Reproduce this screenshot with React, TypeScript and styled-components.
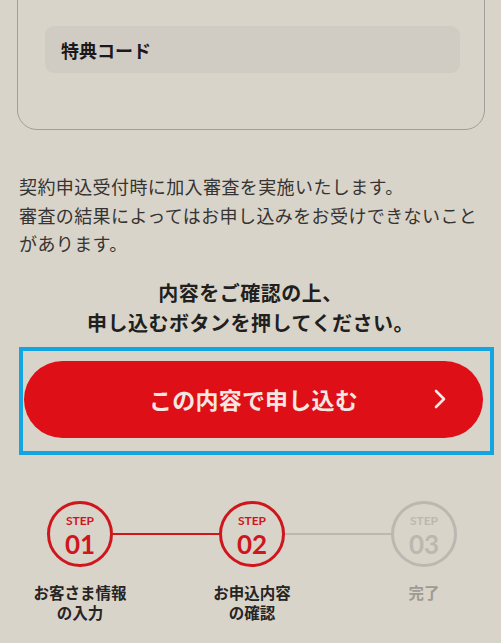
import React from "react";
import styled, { createGlobalStyle } from "styled-components";

const Global = createGlobalStyle`
  html, body {
    margin: 0;
    padding: 0;
    background: #d9d4c9;
  }
  body {
    font-family: "Noto Sans CJK JP", "Noto Sans", sans-serif;
    color: #2c2a2a;
    overflow: hidden;
  }
`;

const Page = styled.div`
  width: 501px;
  height: 643px;
  overflow: hidden;
  background: #d9d4c9;
`;

const Card = styled.div`
  margin: -30px 16px 0 17px;
  padding: 55px 24px 56px 27px;
  border: 1.5px solid #a39d9b;
  border-radius: 20px;
`;

const Field = styled.div`
  height: 47px;
  border-radius: 9px;
  background: #d0ccc3;
  display: flex;
  align-items: center;
  padding-left: 16px;
  font-size: 18px;
  font-weight: 700;
  color: #1c1820;
`;

const Notice = styled.p`
  margin: 42px 0 0 19px;
  font-size: 18px;
  letter-spacing: 0.4px;
  line-height: 28.5px;
  color: #353333;
  white-space: nowrap;
`;

const Prompt = styled.p`
  margin: 20px 0 0 0;
  text-align: center;
  font-size: 20px;
  font-weight: 700;
  line-height: 30px;
  letter-spacing: 0.5px;
  color: #221f1f;
`;

const Highlight = styled.div`
  margin: 9px 7px 0 19px;
  border: 4px solid #13a4e2;
  padding: 10px 7px 13px 1px;
`;

const ApplyButton = styled.button`
  width: 100%;
  height: 77px;
  border: none;
  border-radius: 40px;
  background: #df0f18;
  color: #f3e7e1;
  display: grid;
  grid-template-columns: 1fr auto 1fr;
  align-items: center;
  font-family: inherit;
  font-size: 23px;
  font-weight: 700;
  padding: 0 36px;
  cursor: pointer;
`;

const ButtonLabel = styled.span`
  grid-column: 2;
  letter-spacing: 0.2px;
`;

const Chevron = styled.svg`
  grid-column: 3;
  justify-self: end;
`;

const StepRow = styled.div`
  display: flex;
  align-items: center;
  margin-top: 46px;
  padding-left: 47px;
`;

const Circle = styled.div<{ $active: boolean }>`
  box-sizing: border-box;
  width: 66px;
  height: 66px;
  border-radius: 50%;
  border: 3px solid ${(p) => (p.$active ? "#d0161d" : "#bcb7b0")};
  color: ${(p) => (p.$active ? "#d0161d" : "#bcb7b0")};
  display: flex;
  flex-direction: column;
  align-items: center;
  padding-top: 11px;
  font-family: Lato, "Noto Sans", sans-serif;
  font-weight: 700;
`;

const StepWord = styled.span`
  font-size: 12px;
  line-height: 12px;
`;

const StepNum = styled.span`
  font-size: 26px;
  line-height: 24px;
  margin-top: 5px;
`;

const Connector = styled.div<{ $active: boolean }>`
  width: 106px;
  height: 2px;
  background: ${(p) => (p.$active ? "#d0161d" : "#bcb7b0")};
`;

const LabelRow = styled.div`
  display: flex;
  gap: 52px;
  margin-top: 15px;
  padding-left: 20px;
`;

const Label = styled.div<{ $muted?: boolean }>`
  width: 120px;
  text-align: center;
  font-size: 15.5px;
  font-weight: 700;
  line-height: 20px;
  color: ${(p) => (p.$muted ? "#9e9a94" : "#272424")};
`;

const steps = [
  { n: "01", active: true, label: ["お客さま情報", "の入力"] },
  { n: "02", active: true, label: ["お申込内容", "の確認"] },
  { n: "03", active: false, label: ["完了"] },
];

export default function App() {
  return (
    <Page>
      <Global />
      <Card>
        <Field>特典コード</Field>
      </Card>
      <Notice>
        契約申込受付時に加入審査を実施いたします。
        <br />
        審査の結果によってはお申し込みをお受けできないこと
        <br />
        があります。
      </Notice>
      <Prompt>
        内容をご確認の上、
        <br />
        申し込むボタンを押してください。
      </Prompt>
      <Highlight>
        <ApplyButton>
          <ButtonLabel>この内容で申し込む</ButtonLabel>
          <Chevron width="14" height="22" viewBox="0 0 14 22">
            <path
              d="M3 3 L11 11 L3 19"
              fill="none"
              stroke="#f3e7e1"
              strokeWidth="2.6"
              strokeLinecap="round"
              strokeLinejoin="round"
            />
          </Chevron>
        </ApplyButton>
      </Highlight>
      <StepRow>
        {steps.map((s, i) => (
          <React.Fragment key={s.n}>
            {i > 0 && <Connector $active={s.active} />}
            <Circle $active={s.active}>
              <StepWord>STEP</StepWord>
              <StepNum>{s.n}</StepNum>
            </Circle>
          </React.Fragment>
        ))}
      </StepRow>
      <LabelRow>
        {steps.map((s) => (
          <Label key={s.n} $muted={!s.active}>
            {s.label.map((l, j) => (
              <React.Fragment key={j}>
                {j > 0 && <br />}
                {l}
              </React.Fragment>
            ))}
          </Label>
        ))}
      </LabelRow>
    </Page>
  );
}
